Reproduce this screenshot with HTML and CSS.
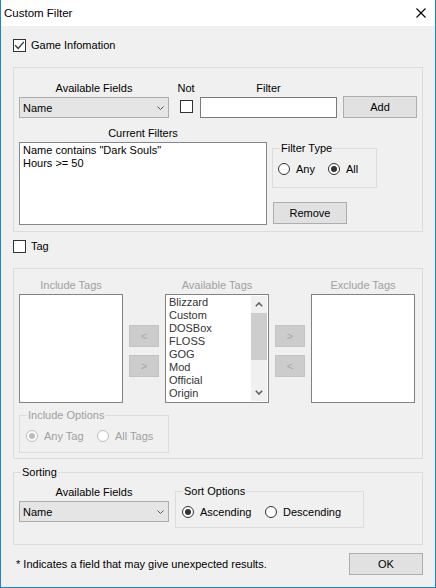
FILE: index.html
```html
<!DOCTYPE html>
<html>
<head>
<meta charset="utf-8">
<link rel="stylesheet" href="styles.css">
</head>
<body>
<div class="window">
  <div class="titlebar">
    <span class="title">Custom Filter</span>
    <svg class="close" width="10" height="10" viewBox="0 0 10 10"><path d="M0.5 0.5L9.5 9.5M9.5 0.5L0.5 9.5" stroke="#000" stroke-width="1.1" fill="none"/></svg>
  </div>
  <div class="content">
    <div class="check-row first">
      <span class="cb"><svg width="11" height="11" viewBox="0 0 11 11"><polyline points="1.2,5.2 4.2,8.4 9.8,1.8" fill="none" stroke="#333" stroke-width="1.3"/></svg></span>
      <span class="cb-text">Game Infomation</span>
    </div>

    <div class="group g1">
      <div class="row">
        <div class="col w150">
          <div class="lbl">Available Fields</div>
          <div class="combo"><span>Name</span><svg width="7" height="4" viewBox="0 0 7 4"><polyline points="0.5,0.5 3.5,3.5 6.5,0.5" fill="none" stroke="#555" stroke-width="1"/></svg></div>
        </div>
        <div class="col notcol">
          <div class="lbl">Not</div>
          <span class="cb not-cb"></span>
        </div>
        <div class="col filtercol">
          <div class="lbl">Filter</div>
          <div class="textbox"></div>
        </div>
        <div class="col addcol">
          <button class="btn">Add</button>
        </div>
      </div>
      <div class="row row2">
        <div class="col curcol">
          <div class="lbl">Current Filters</div>
          <div class="listbox filters">
            <div>Name contains "Dark Souls"</div>
            <div>Hours &gt;= 50</div>
          </div>
        </div>
        <div class="col rightcol">
          <div class="group ftype">
            <span class="cap">Filter Type</span>
            <div class="ropt w50"><span class="radio"></span><span>Any</span></div>
            <div class="ropt"><span class="radio on"></span><span>All</span></div>
          </div>
          <button class="btn remove">Remove</button>
        </div>
      </div>
    </div>

    <div class="check-row tag">
      <span class="cb"></span>
      <span class="cb-text">Tag</span>
    </div>

    <div class="group g2 disabled">
      <div class="row tagsrow">
        <div class="col tagcol">
          <div class="lbl">Include Tags</div>
          <div class="listbox taglist"></div>
        </div>
        <div class="col arrows">
          <button class="abtn">&lt;</button>
          <button class="abtn">&gt;</button>
        </div>
        <div class="col tagcol">
          <div class="lbl">Available Tags</div>
          <div class="listbox taglist avail">
            <div class="items">
              <div>Blizzard</div>
              <div>Custom</div>
              <div>DOSBox</div>
              <div>FLOSS</div>
              <div>GOG</div>
              <div>Mod</div>
              <div>Official</div>
              <div>Origin</div>
            </div>
            <div class="scrollbar">
              <div class="sb-btn"><svg width="8" height="5" viewBox="0 0 8 5"><polyline points="0.8,4.2 4,1 7.2,4.2" fill="none" stroke="#606060" stroke-width="1.6"/></svg></div>
              <div class="sb-thumb"></div>
              <div class="sb-track"></div>
              <div class="sb-btn"><svg width="8" height="5" viewBox="0 0 8 5"><polyline points="0.8,0.8 4,4 7.2,0.8" fill="none" stroke="#606060" stroke-width="1.6"/></svg></div>
            </div>
          </div>
        </div>
        <div class="col arrows">
          <button class="abtn">&gt;</button>
          <button class="abtn">&lt;</button>
        </div>
        <div class="col tagcol">
          <div class="lbl">Exclude Tags</div>
          <div class="listbox taglist"></div>
        </div>
      </div>
      <div class="group incopts">
        <span class="cap">Include Options</span>
        <div class="ropt w71"><span class="radio on"></span><span>Any Tag</span></div>
        <div class="ropt"><span class="radio"></span><span>All Tags</span></div>
      </div>
    </div>

    <div class="group sorting">
      <span class="cap">Sorting</span>
      <div class="row">
        <div class="col w150">
          <div class="lbl">Available Fields</div>
          <div class="combo"><span>Name</span><svg width="7" height="4" viewBox="0 0 7 4"><polyline points="0.5,0.5 3.5,3.5 6.5,0.5" fill="none" stroke="#555" stroke-width="1"/></svg></div>
        </div>
        <div class="group sortopts">
          <span class="cap">Sort Options</span>
          <div class="ropt w83"><span class="radio on"></span><span>Ascending</span></div>
          <div class="ropt"><span class="radio"></span><span>Descending</span></div>
        </div>
      </div>
    </div>

    <div class="footer">
      <span class="note">* Indicates a field that may give unexpected results.</span>
      <button class="btn">OK</button>
    </div>
  </div>
</div>
</body>
</html>
```

FILE: styles.css
```css
* {
  box-sizing: border-box;
}

body {
  margin: 0;
  font-family: "Liberation Sans", Arial, sans-serif;
  font-size: 11px;
  color: #000;
}

.window {
  width: 436px;
  height: 588px;
  border: 1px solid #1883d7;
  border-top: none;
  background: #f0f0f0;
  display: flex;
  flex-direction: column;
}

.titlebar {
  height: 26px;
  flex: none;
  background: #fff;
  display: flex;
  align-items: center;
  justify-content: space-between;
  padding: 0 9px 0 3px;
}

.title {
  font-size: 11.5px;
  line-height: 14px;
}

.close {
  display: block;
}

.content {
  padding: 0 12px;
  flex: 1;
  display: flex;
  flex-direction: column;
}

.check-row {
  display: flex;
  align-items: center;
  height: 13px;
  line-height: 13px;
}

.check-row.first {
  margin-top: 13px;
}

.check-row.tag {
  margin-top: 8px;
}

.cb {
  width: 13px;
  height: 13px;
  flex: none;
  border: 1px solid #333;
  background: #fff;
  display: block;
}

.cb svg {
  display: block;
}

.cb-text {
  margin-left: 5px;
  white-space: nowrap;
}

.group {
  border: 1px solid #dcdcdc;
  position: relative;
}

.cap {
  position: absolute;
  top: -8px;
  left: 7px;
  padding: 0 1px;
  background: #f0f0f0;
  line-height: 14px;
  white-space: nowrap;
}

.row {
  display: flex;
  align-items: flex-start;
}

.col {
  display: flex;
  flex-direction: column;
}

.lbl {
  height: 14px;
  line-height: 14px;
  margin-bottom: 2px;
  text-align: center;
  white-space: nowrap;
}

/* group 1 */
.g1 {
  margin-top: 15px;
  padding: 13px 5px 6px;
}

.w150 {
  width: 150px;
}

.combo {
  height: 21px;
  background: #e5e5e5;
  border: 1px solid #adadad;
  display: flex;
  align-items: center;
  justify-content: space-between;
  padding: 0 4px 0 3px;
  line-height: 14px;
}

.combo svg {
  display: block;
}

.notcol {
  width: 26px;
  margin-left: 4px;
  align-items: center;
}

.not-cb {
  margin-top: 3px;
  margin-left: 1px;
}

.filtercol {
  width: 137px;
  margin-left: 1px;
}

.textbox {
  height: 21px;
  background: #fff;
  border: 1px solid #7a7a7a;
}

.addcol {
  margin-left: 6px;
  padding-top: 15px;
}

.btn {
  width: 74px;
  height: 22px;
  background: #e1e1e1;
  border: 1px solid #adadad;
  font: inherit;
  color: #000;
  padding: 0;
  margin: 0;
  line-height: 14px;
}

.row2 {
  margin-top: 8px;
}

.curcol {
  width: 248px;
}

.listbox {
  background: #fff;
  border: 1px solid #828790;
  line-height: 13px;
}

.filters {
  height: 83px;
  padding: 1px 3px;
  white-space: nowrap;
}

.rightcol {
  margin-left: 5px;
  align-items: flex-start;
}

.ftype {
  width: 105px;
  height: 40px;
  margin-top: 22px;
  padding: 13px 0 0 5px;
  display: flex;
  align-items: flex-start;
}

.ropt {
  display: flex;
  align-items: center;
  height: 14px;
  line-height: 14px;
  white-space: nowrap;
}

.w50 {
  width: 50px;
}

.w71 {
  width: 71px;
}

.w83 {
  width: 83px;
}

.radio {
  width: 12px;
  height: 12px;
  flex: none;
  border: 1px solid #333;
  border-radius: 50%;
  background: #fff;
  position: relative;
  margin-right: 6px;
}

.radio.on::after {
  content: "";
  position: absolute;
  left: 2px;
  top: 2px;
  width: 6px;
  height: 6px;
  border-radius: 50%;
  background: #333;
}

.remove {
  margin-top: 14px;
  margin-left: 1px;
}

/* group 2 (disabled) */
.g2 {
  margin-top: 15px;
  padding: 9px 5px 5px;
}

.disabled .lbl,
.disabled .cap,
.disabled .ropt {
  color: #a0a0a0;
}

.tagcol {
  width: 104px;
}

.taglist {
  height: 109px;
  border-color: #828282;
}

.avail {
  display: flex;
  padding: 1px;
}

.avail .items {
  flex: 1;
  padding-left: 2px;
  color: #333;
}

.scrollbar {
  width: 16px;
  background: #f0f0f0;
  display: flex;
  flex-direction: column;
}

.sb-btn {
  height: 17px;
  display: flex;
  align-items: center;
  justify-content: center;
}

.sb-btn svg {
  display: block;
}

.sb-thumb {
  height: 47px;
  background: #cdcdcd;
}

.sb-track {
  flex: 1;
}

.arrows {
  width: 30px;
  margin: 0 6px;
  padding-top: 47px;
  gap: 8px;
}

.abtn {
  width: 30px;
  height: 22px;
  background: #cccccc;
  border: 1px solid #c4c4c4;
  color: #a8a8a8;
  font: inherit;
  padding: 0;
  margin: 0;
  line-height: 14px;
}

.incopts {
  width: 150px;
  height: 38px;
  margin-top: 12px;
  padding: 13px 0 0 6px;
  display: flex;
  align-items: flex-start;
}

.disabled .radio {
  border-color: #bcbcbc;
}

.disabled .radio.on::after {
  background: #bcbcbc;
}

/* sorting */
.sorting {
  margin-top: 13px;
  padding: 12px 5px 16px;
}

.sortopts {
  width: 189px;
  height: 37px;
  margin-top: 6px;
  margin-left: 6px;
  padding: 13px 0 0 6px;
  display: flex;
  align-items: flex-start;
}

/* footer */
.footer {
  margin-top: 8px;
  display: flex;
  justify-content: space-between;
  align-items: center;
  padding-left: 3px;
}

.note {
  line-height: 14px;
  white-space: nowrap;
}
```
